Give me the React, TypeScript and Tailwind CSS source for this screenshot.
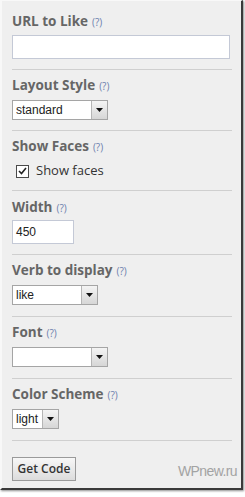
import type { ReactNode } from "react";

const font = { fontFamily: '"Open Sans", "Liberation Sans", sans-serif' };

function Help() {
  return <span className="ml-[4px] text-[10px] font-normal text-[#6d7fae]">(?)</span>;
}

function Heading({ children }: { children: ReactNode }) {
  return (
    <div className="h-[20px] text-[13.5px] leading-[20px] font-bold text-[#666]">
      {children}
      <Help />
    </div>
  );
}

function Select({ value, width }: { value: string; width: string }) {
  return (
    <div className={`flex h-[20px] border border-[#a5a5a5] bg-white ${width}`}>
      <div
        className="flex-1 pl-[3px] text-[12px] leading-[18px] text-[#222]"
        style={{ fontFamily: '"Liberation Sans", Arial, sans-serif' }}
      >
        {value}
      </div>
      <div className="flex w-[16px] items-center justify-center border-l border-[#b5b5b5] bg-gradient-to-b from-[#f4f4f4] to-[#d6d6d6]">
        <svg width="7" height="4" viewBox="0 0 7 4">
          <path d="M0 0h7L3.5 4z" fill="#111" />
        </svg>
      </div>
    </div>
  );
}

function Section({ children, className }: { children: ReactNode; className: string }) {
  return <div className={`w-[220px] border-b border-[#cfcfcf] ${className}`}>{children}</div>;
}

export default function App() {
  return (
    <div className="relative h-[497px] w-[245px] bg-white" style={font}>
      <div className="h-[490px] w-[243px] border-t border-l-2 border-[#f8f8f8] border-r-2 border-r-[#3a3a3a] border-b-2 border-b-[#3a3a3a] bg-[#efefef] shadow-[1px_1px_2px_rgba(0,0,0,0.45)]">
        <div className="pl-[10px]">
          <Section className="pt-[10px] pb-[10px]">
            <Heading>URL to Like</Heading>
            <div className="mt-[4px] h-[24px] w-[218px] border border-[#c4c9d6] bg-white" />
          </Section>

          <Section className="pt-[5px] pb-[10px]">
            <Heading>Layout Style</Heading>
            <div className="mt-[5px]">
              <Select value="standard" width="w-[96px]" />
            </div>
          </Section>

          <Section className="pt-[5px] pb-[9px]">
            <Heading>Show Faces</Heading>
            <div className="mt-[5px] flex h-[20px] items-center pl-[4px]">
              <div className="flex h-[13px] w-[13px] items-center justify-center border border-[#4a4a4a] bg-white">
                <svg width="9" height="8" viewBox="0 0 9 8">
                  <path d="M1 4l2.5 2.5L8 1" fill="none" stroke="#222" strokeWidth="1.6" />
                </svg>
              </div>
              <span className="ml-[7px] text-[13px] text-[#333]">Show faces</span>
            </div>
          </Section>

          <Section className="pt-[6px] pb-[10px]">
            <Heading>Width</Heading>
            <div className="mt-[3px] flex h-[24px] w-[62px] items-center border border-[#c4c9d6] bg-white pl-[3px] text-[12px] text-[#222]" style={{ fontFamily: '"Liberation Sans", Arial, sans-serif' }}>
              450
            </div>
          </Section>

          <Section className="pt-[5px] pb-[11px]">
            <Heading>Verb to display</Heading>
            <div className="mt-[5px]">
              <Select value="like" width="w-[86px]" />
            </div>
          </Section>

          <Section className="pt-[5px] pb-[11px]">
            <Heading>Font</Heading>
            <div className="mt-[5px]">
              <Select value="" width="w-[96px]" />
            </div>
          </Section>

          <Section className="pt-[5px] pb-[11px]">
            <Heading>Color Scheme</Heading>
            <div className="mt-[5px]">
              <Select value="light" width="w-[47px]" />
            </div>
          </Section>

          <div className="pt-[14px]">
            <button className="h-[24px] w-[64px] border border-[#9a9a9a] bg-gradient-to-b from-[#f7f7f7] to-[#dcdcdc] text-[12px] font-semibold text-[#333]">
              Get Code
            </button>
          </div>
        </div>
      </div>
      <div
        className="absolute top-[462px] left-[178px] text-[14px] leading-[18px] tracking-[-0.6px] text-[#a3a3a3]"
        style={{ fontFamily: '"Liberation Sans", Arial, sans-serif' }}
      >
        WPnew.ru
      </div>
    </div>
  );
}
